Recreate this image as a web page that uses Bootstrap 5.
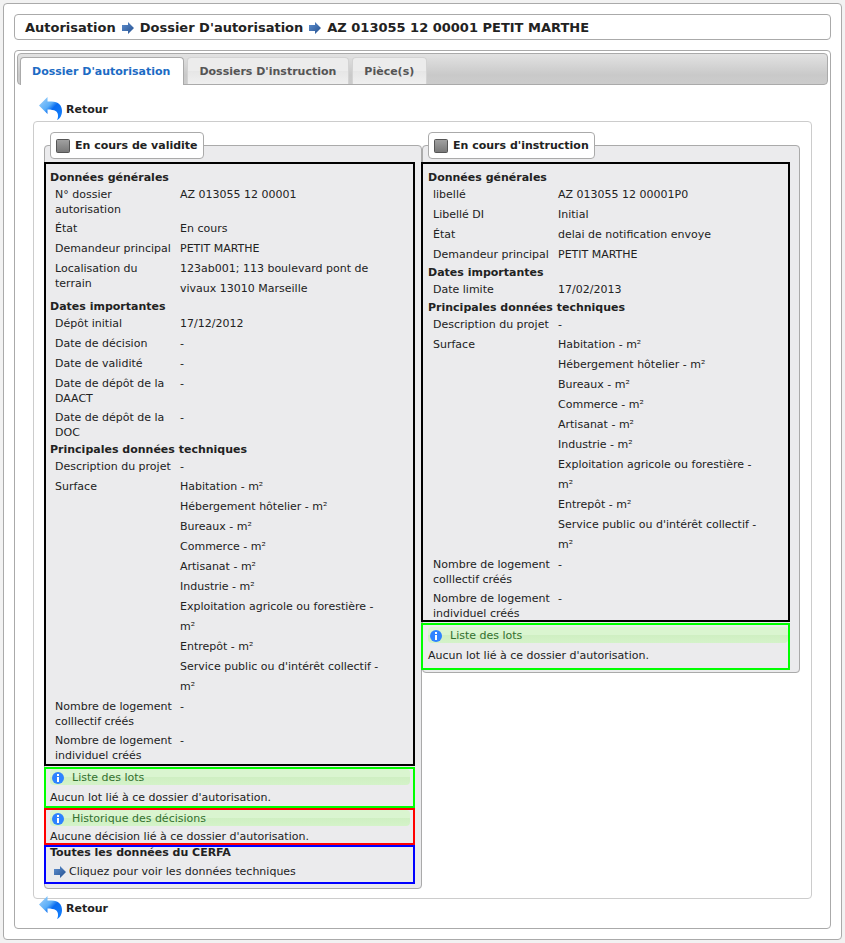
<!DOCTYPE html>
<html lang="fr">
<head>
<meta charset="utf-8">
<meta name="viewport" content="width=device-width, initial-scale=1">
<title>Dossier D'autorisation</title>
<link rel="stylesheet" href="https://cdn.jsdelivr.net/npm/bootstrap@5.3.0/dist/css/bootstrap.min.css">
<style>
body { background: #f2f2f2; color: #222; font-family: "DejaVu Sans", Verdana, sans-serif; font-size: 11px; line-height: 15px; padding: 3px; }
a { color: #222; text-decoration: none; }
.frame { background: #fff; border: 1px solid #aaa; border-radius: 4px; }
.shell { padding: 10px; }
.trail { font-size: 13px; line-height: 20px; padding: 3px 10px 1px; gap: 5px; }
.tabs-frame { padding: 2px; margin-top: 10px; }
.tabbar { background: linear-gradient(#e2e2e2, #c9c9c9 70%, #cccccc); border: 1px solid #aaa; border-radius: 4px; padding: 3px 2px 0; gap: 3px; }
.tabbar .nav-link { border: 1px solid #d3d3d3; border-bottom: 0; border-radius: 4px 4px 0 0; padding: 6px 12px 5px 11px; margin: 0; color: #555; background: linear-gradient(#ececec 50%, #e6e6e6 50%, #efefef); font-weight: bold; }
.tabbar .nav-link.active { background: #fff; border-color: #aaa; color: #1c6bc4; margin-bottom: -1px; padding-right: 13px; padding-bottom: 6px; }
.tab-body { padding: 12px 16px 6px; }
.back { gap: 3px; padding-left: 6px; height: 24px; }
.sheet + .back { margin-top: -3px; }
.sheet { background: #fff; border: 1px solid #ccc; border-radius: 4px; padding: 10px 11px 9px 10px; }
.panel { background: #ebebed; border: 1px solid #aaa; border-radius: 4px; padding: 3px 6px 4px 0; }
.panel legend { float: none; width: auto; margin: 0 0 0 5px; padding: 5px 5px 5px 5px; background: #fff; border: 1px solid #aaa; border-radius: 4px; font-size: 11px; line-height: 15px; font-weight: bold; gap: 5px; }
.panel-end { padding: 3px 9px 2px 0; }
.zone { border: 2px solid #000; padding: 0 0 0 4px; margin-left: -1px; }
.panel-end .zone { margin-left: -2px; padding-left: 5px; }
.zone-data { padding-top: 6px; }
.zone-data dl:last-child { margin-bottom: -1px; }
.zone h2 { font-size: 11px; line-height: 15px; font-weight: bold; margin: 0; }
.zone dl { margin: 0; padding: 0 26px 0 5px; display: grid; grid-template-columns: 125px 1fr; }
.zone dt { font-weight: normal; padding: 2px 4px 2px 0; }
.zone dd { margin: 0; line-height: 20px; }
.zone-lots { border-color: #0f0; margin-top: 1px; padding-bottom: 1px; }
.panel-end .zone-lots { padding-top: 2px; padding-bottom: 5px; }
.zone-history { border-color: #f00; }
.zone-cerfa { border-color: #00f; padding-bottom: 2px; }
.zone .notice { background: linear-gradient(#daf5d0 50%, #cfefc2 50%, #d4f3c9); color: #33702f; border-radius: 4px; margin: 0 3px 5px 0; padding: 1px 0 0 1px; gap: 7px; font-weight: normal; }
.panel-end .notice { margin-right: 0; }
.zone-history p { line-height: 12px; }
.zone-cerfa h2 { line-height: 11px; }
.zone-cerfa a { margin-top: 6px; gap: 2px; padding-left: 3px; line-height: 16px; }
</style>
</head>
<body>
<svg class="visually-hidden" width="1" height="1" aria-hidden="true">
  <defs>
    <linearGradient id="gBack" x1="0" y1="0" x2="1" y2="1"><stop offset="0" stop-color="#a5d3fa"/><stop offset=".4" stop-color="#5aaef8"/><stop offset=".55" stop-color="#0a6cf0"/><stop offset="1" stop-color="#1583ff"/></linearGradient>
    <linearGradient id="gArrow" x1="0" y1="0" x2="1" y2="1"><stop offset="0" stop-color="#5f8fcf"/><stop offset="1" stop-color="#24508f"/></linearGradient>
    <linearGradient id="gBox" x1="0" y1="0" x2="0" y2="1"><stop offset="0" stop-color="#a2a2a2"/><stop offset="1" stop-color="#777"/></linearGradient>
  </defs>
</svg>
<div class="frame shell">
  <nav class="frame trail d-flex align-items-center fw-bold" aria-label="Fil d'Ariane">
    <span>Autorisation</span>
    <svg width="14" height="14" viewBox="0 0 14 14" aria-hidden="true"><path d="M1 4h6V1l6 6-6 6v-3H1z" fill="url(#gArrow)"/></svg>
    <span>Dossier D'autorisation</span>
    <svg width="14" height="14" viewBox="0 0 14 14" aria-hidden="true"><path d="M1 4h6V1l6 6-6 6v-3H1z" fill="url(#gArrow)"/></svg>
    <span>AZ 013055 12 00001 PETIT MARTHE</span>
  </nav>
  <div class="frame tabs-frame">
    <nav class="nav tabbar">
      <a class="nav-link active" href="#dossier" aria-current="page">Dossier D'autorisation</a>
      <a class="nav-link" href="#instruction">Dossiers D'instruction</a>
      <a class="nav-link" href="#pieces">Pièce(s)</a>
    </nav>
    <main class="tab-body" id="dossier">
      <a class="back d-flex align-items-center fw-bold" href="#retour"><svg width="24" height="24" viewBox="0 0 24 24" aria-hidden="true"><path d="M0 8.500L8.500 0v4.500h4c7 0 10.500 4 10.500 9.500 0 4-2 8-5 9 1-2 1-3 1-4.500 0-4-3-6-10.500-6V17z" fill="url(#gBack)"/></svg>Retour</a>
      <div class="sheet">
        <div class="row g-0 align-items-start">
          <div class="col-6">
            <fieldset class="panel">
              <legend class="d-flex align-items-center"><svg width="14" height="14" viewBox="0 0 14 14" aria-hidden="true"><rect x=".5" y=".5" width="13" height="13" rx="1" fill="url(#gBox)" stroke="#555"/></svg>En cours de validite</legend>
              <section class="zone zone-data">
                <h2>Données générales</h2>
                <dl>
                  <dt>N° dossier autorisation</dt><dd>AZ 013055 12 00001</dd>
                  <dt>État</dt><dd>En cours</dd>
                  <dt>Demandeur principal</dt><dd>PETIT MARTHE</dd>
                  <dt>Localisation du terrain</dt><dd>123ab001; 113 boulevard pont de vivaux 13010 Marseille</dd>
                </dl>
                <h2>Dates importantes</h2>
                <dl>
                  <dt>Dépôt initial</dt><dd>17/12/2012</dd>
                  <dt>Date de décision</dt><dd>-</dd>
                  <dt>Date de validité</dt><dd>-</dd>
                  <dt>Date de dépôt de la DAACT</dt><dd>-</dd>
                  <dt>Date de dépôt de la DOC</dt><dd>-</dd>
                </dl>
                <h2>Principales données techniques</h2>
                <dl>
                  <dt>Description du projet</dt><dd>-</dd>
                  <dt>Surface</dt><dd>Habitation - m²<br>Hébergement hôtelier - m²<br>Bureaux - m²<br>Commerce - m²<br>Artisanat - m²<br>Industrie - m²<br>Exploitation agricole ou forestière - m²<br>Entrepôt - m²<br>Service public ou d'intérêt collectif - m²</dd>
                  <dt>Nombre de logement colllectif créés</dt><dd>-</dd>
                  <dt>Nombre de logement individuel créés</dt><dd>-</dd>
                </dl>
              </section>
              <section class="zone zone-lots">
                <h2 class="notice d-flex align-items-center"><svg width="14" height="14" viewBox="0 0 14 14" aria-hidden="true"><circle cx="7" cy="7" r="6" fill="#2e83ff"/><path d="M6 3h2v2H6zM6 6h2v5H6z" fill="#fff"/></svg>Liste des lots</h2>
                <p class="m-0">Aucun lot lié à ce dossier d'autorisation.</p>
              </section>
              <section class="zone zone-history">
                <h2 class="notice d-flex align-items-center"><svg width="14" height="14" viewBox="0 0 14 14" aria-hidden="true"><circle cx="7" cy="7" r="6" fill="#2e83ff"/><path d="M6 3h2v2H6zM6 6h2v5H6z" fill="#fff"/></svg>Historique des décisions</h2>
                <p class="m-0">Aucune décision lié à ce dossier d'autorisation.</p>
              </section>
              <section class="zone zone-cerfa">
                <h2>Toutes les données du CERFA</h2>
                <a class="d-flex align-items-center" href="#donnees"><svg width="14" height="14" viewBox="0 0 14 14" aria-hidden="true"><path d="M1 4h6V1l6 6-6 6v-3H1z" fill="url(#gArrow)"/></svg>Cliquez pour voir les données techniques</a>
              </section>
            </fieldset>
          </div>
          <div class="col-6">
            <fieldset class="panel panel-end">
              <legend class="d-flex align-items-center"><svg width="14" height="14" viewBox="0 0 14 14" aria-hidden="true"><rect x=".5" y=".5" width="13" height="13" rx="1" fill="url(#gBox)" stroke="#555"/></svg>En cours d'instruction</legend>
              <section class="zone zone-data">
                <h2>Données générales</h2>
                <dl>
                  <dt>libellé</dt><dd>AZ 013055 12 00001P0</dd>
                  <dt>Libellé DI</dt><dd>Initial</dd>
                  <dt>État</dt><dd>delai de notification envoye</dd>
                  <dt>Demandeur principal</dt><dd>PETIT MARTHE</dd>
                </dl>
                <h2>Dates importantes</h2>
                <dl>
                  <dt>Date limite</dt><dd>17/02/2013</dd>
                </dl>
                <h2>Principales données techniques</h2>
                <dl>
                  <dt>Description du projet</dt><dd>-</dd>
                  <dt>Surface</dt><dd>Habitation - m²<br>Hébergement hôtelier - m²<br>Bureaux - m²<br>Commerce - m²<br>Artisanat - m²<br>Industrie - m²<br>Exploitation agricole ou forestière - m²<br>Entrepôt - m²<br>Service public ou d'intérêt collectif - m²</dd>
                  <dt>Nombre de logement colllectif créés</dt><dd>-</dd>
                  <dt class="pb-0">Nombre de logement individuel créés</dt><dd>-</dd>
                </dl>
              </section>
              <section class="zone zone-lots">
                <h2 class="notice d-flex align-items-center"><svg width="14" height="14" viewBox="0 0 14 14" aria-hidden="true"><circle cx="7" cy="7" r="6" fill="#2e83ff"/><path d="M6 3h2v2H6zM6 6h2v5H6z" fill="#fff"/></svg>Liste des lots</h2>
                <p class="m-0">Aucun lot lié à ce dossier d'autorisation.</p>
              </section>
            </fieldset>
          </div>
        </div>
      </div>
      <a class="back d-flex align-items-center fw-bold" href="#retour"><svg width="24" height="24" viewBox="0 0 24 24" aria-hidden="true"><path d="M0 8.500L8.500 0v4.500h4c7 0 10.500 4 10.500 9.500 0 4-2 8-5 9 1-2 1-3 1-4.500 0-4-3-6-10.500-6V17z" fill="url(#gBack)"/></svg>Retour</a>
    </main>
  </div>
</div>
<script src="https://cdn.jsdelivr.net/npm/bootstrap@5.3.0/dist/js/bootstrap.bundle.min.js"></script>
</body>
</html>
